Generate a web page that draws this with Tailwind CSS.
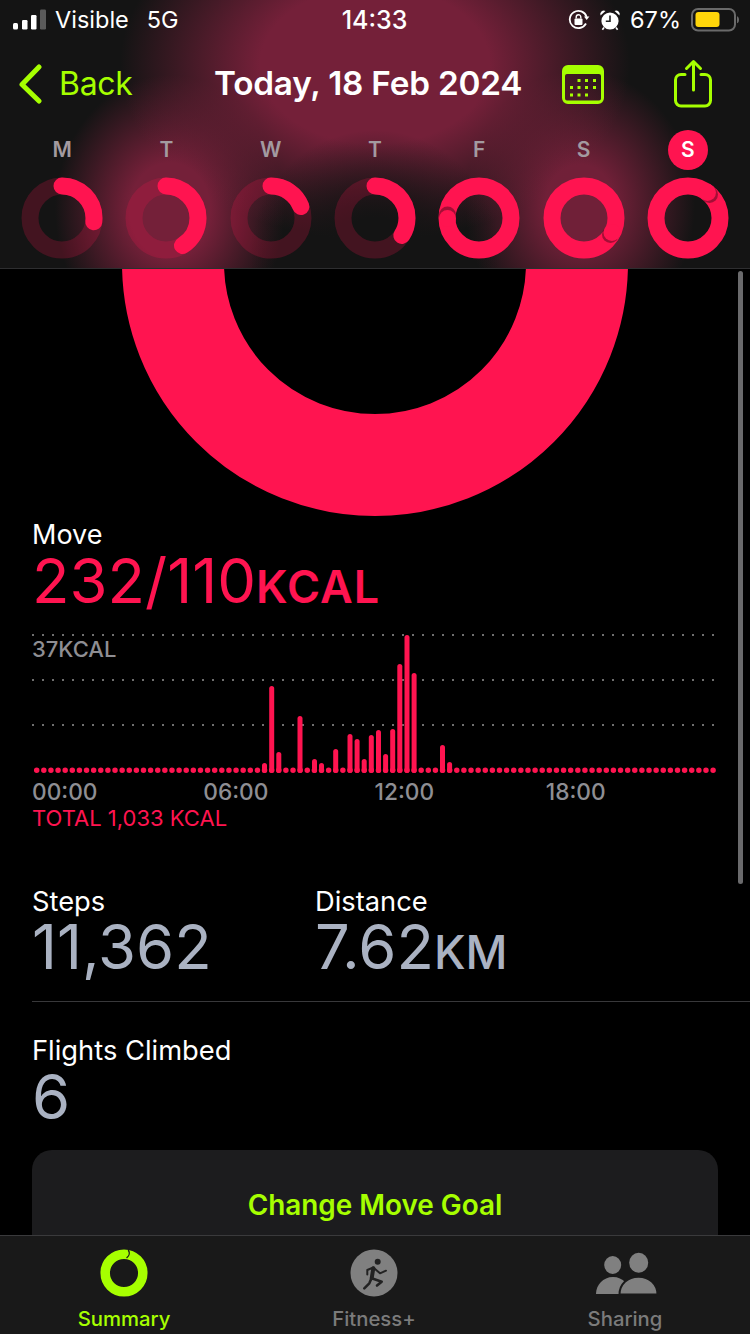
<!DOCTYPE html>
<html lang="en">
<head>
<meta charset="utf-8">
<title>Activity</title>
<script src="https://cdn.jsdelivr.net/npm/@tailwindcss/browser@4"></script>
</head>
<body class="bg-black">
<div class="w-[750px] h-[1334px] flex flex-col overflow-hidden bg-black text-white font-['Inter',sans-serif]">

  <!-- Header -->
  <header class="h-[269px] shrink-0 border-b border-[#2e2e30] bg-[#141414] bg-[radial-gradient(ellipse_125px_125px_at_375px_255px,#141414_30%,transparent_100%),radial-gradient(ellipse_255px_175px_at_375px_65px,#742039_45%,transparent_100%),radial-gradient(ellipse_115px_135px_at_170px_210px,#742039_35%,transparent_100%),radial-gradient(ellipse_115px_135px_at_580px_205px,#702038_30%,transparent_100%)]">
    <!-- Status bar -->
    <div class="h-[40px] flex items-center justify-between pl-[13px] pr-[11px] text-[23.5px] leading-none">
      <div class="flex items-center w-[260px]">
        <svg width="34" height="22" viewBox="0 0 34 22" class="shrink-0">
          <rect x="0" y="14" width="5" height="6.5" rx="1.5" fill="#fff"/>
          <rect x="9" y="11" width="5.5" height="9.5" rx="1.2" fill="#fff"/>
          <rect x="18" y="6" width="5.5" height="14.5" rx="1.2" fill="#fff"/>
          <rect x="27" y="0.5" width="6" height="20" rx="1.2" fill="#5a5a5a"/>
        </svg>
        <span class="ml-[8px]">Visible</span>
        <span class="ml-[18px]">5G</span>
      </div>
      <span class="font-medium text-[25px] -ml-[3px]">14:33</span>
      <div class="flex items-center justify-end w-[260px]">
        <svg width="22" height="22" viewBox="0 0 22 22" fill="none" class="mr-[9px]">
          <path d="M18 14.5A8.6 8.6 0 1 1 18.6 8" stroke="#fff" stroke-width="1.8"/>
          <path d="M16 7.5h5.4l-2.7 3.6z" fill="#fff"/>
          <rect x="6.5" y="9.5" width="8" height="6.5" rx="1" fill="#fff"/>
          <path d="M8.2 9.5V8a2.3 2.3 0 0 1 4.6 0v1.5" stroke="#fff" stroke-width="1.4"/>
        </svg>
        <svg width="22" height="22" viewBox="0 0 22 22" fill="none" class="mr-[9px]">
          <circle cx="11" cy="12" r="8.6" fill="#fff"/>
          <path d="M11 6.5V12.3H6.8" stroke="#222" stroke-width="1.6"/>
          <path d="M1.5 6.5A3.6 3.6 0 0 1 6.5 2ZM20.5 6.5A3.6 3.6 0 0 0 15.5 2Z" fill="#fff"/>
          <path d="M5 18.5 3.4 20.8M17 18.5l1.6 2.3" stroke="#fff" stroke-width="1.6"/>
        </svg>
        <span>67%</span>
        <svg width="48" height="24" viewBox="0 0 48 24" fill="none" class="ml-[10px]">
          <rect x="1" y="1" width="43" height="21.5" rx="6" stroke="#6a6a6a" stroke-width="2"/>
          <rect x="4.5" y="4" width="24" height="15" rx="3" fill="#ffd60a"/>
          <path d="M46 8.2c1.5.5 2 2 2 3.5s-.5 3-2 3.5z" fill="#6a6a6a"/>
        </svg>
      </div>
    </div>

    <!-- Nav -->
    <div class="h-[88px] relative flex items-center">
      <div class="flex items-center pl-[19px] w-[200px] text-[#a6ff00] text-[32px]">
        <svg width="24" height="40" viewBox="0 0 24 40" fill="none">
          <path d="M20 3 3 20.5 20 37" stroke="#a6ff00" stroke-width="5" stroke-linecap="round" stroke-linejoin="round"/>
        </svg>
        <span class="ml-[16px] tracking-[-0.3px]">Back</span>
      </div>
      <h1 class="absolute left-[214px] text-[33.3px] font-semibold whitespace-nowrap tracking-[-0.2px]">Today, 18 Feb 2024</h1>
      <svg width="42" height="39" viewBox="0 0 42 39" class="absolute left-[562px] top-[25px]">
        <path fill-rule="evenodd" fill="#a6ff00" d="M6 0H36a6 6 0 0 1 6 6V33a6 6 0 0 1-6 6H6a6 6 0 0 1-6-6V6a6 6 0 0 1 6-6ZM5 9a2 2 0 0 0-2 2V33.500a2 2 0 0 0 2 2H37a2 2 0 0 0 2-2V11a2 2 0 0 0-2-2Z"/>
        <g fill="#a6ff00">
          <rect x="15.500" y="14" width="3" height="3"/><rect x="23" y="14" width="3" height="3"/><rect x="31" y="14" width="3" height="3"/>
          <rect x="8" y="21" width="3" height="3"/><rect x="15.500" y="21" width="3" height="3"/><rect x="23" y="21" width="3" height="3"/><rect x="31" y="21" width="3" height="3"/>
          <rect x="8" y="28.500" width="3" height="3"/><rect x="15.500" y="28.500" width="3" height="3"/><rect x="23" y="28.500" width="3" height="3"/>
        </g>
      </svg>
      <svg width="42" height="50" viewBox="0 0 42 50" fill="none" class="absolute left-[673px] top-[19px]" stroke="#a6ff00" stroke-width="3" stroke-linecap="round" stroke-linejoin="round">
        <path d="M12 15.500H8a5.500 5.500 0 0 0-5.500 5.500V41.500a5.500 5.500 0 0 0 5.500 5.500H32a5.500 5.500 0 0 0 5.500-5.500V21a5.500 5.500 0 0 0-5.500-5.500H28"/>
        <path d="M20.500 31V2.500M13.500 9.500l7-7 7 7"/>
      </svg>
    </div>

    <!-- Week -->
    <div class="grid grid-cols-7 w-[730px] ml-[10px] h-[140px] text-[21px] font-semibold text-[#a39aa0]">
      <div class="flex flex-col items-center">
        <div class="h-[44px] mb-[4px] flex items-center justify-center">M</div>
        <svg width="84" height="84" viewBox="0 0 84 84" fill="none" stroke-width="17">
          <circle cx="42" cy="42" r="32" stroke="#ff1450" stroke-opacity=".2"/>
          <circle cx="42" cy="42" r="32" stroke="#ff1450" pathLength="360" stroke-dasharray="97 360" stroke-linecap="round" transform="rotate(-90 42 42)"/>
        </svg>
      </div>
      <div class="flex flex-col items-center">
        <div class="h-[44px] mb-[4px] flex items-center justify-center">T</div>
        <svg width="84" height="84" viewBox="0 0 84 84" fill="none" stroke-width="17">
          <circle cx="42" cy="42" r="32" stroke="#ff1450" stroke-opacity=".2"/>
          <circle cx="42" cy="42" r="32" stroke="#ff1450" pathLength="360" stroke-dasharray="149 360" stroke-linecap="round" transform="rotate(-90 42 42)"/>
        </svg>
      </div>
      <div class="flex flex-col items-center">
        <div class="h-[44px] mb-[4px] flex items-center justify-center">W</div>
        <svg width="84" height="84" viewBox="0 0 84 84" fill="none" stroke-width="17">
          <circle cx="42" cy="42" r="32" stroke="#ff1450" stroke-opacity=".2"/>
          <circle cx="42" cy="42" r="32" stroke="#ff1450" pathLength="360" stroke-dasharray="69 360" stroke-linecap="round" transform="rotate(-90 42 42)"/>
        </svg>
      </div>
      <div class="flex flex-col items-center">
        <div class="h-[44px] mb-[4px] flex items-center justify-center">T</div>
        <svg width="84" height="84" viewBox="0 0 84 84" fill="none" stroke-width="17">
          <circle cx="42" cy="42" r="32" stroke="#ff1450" stroke-opacity=".2"/>
          <circle cx="42" cy="42" r="32" stroke="#ff1450" pathLength="360" stroke-dasharray="123 360" stroke-linecap="round" transform="rotate(-90 42 42)"/>
        </svg>
      </div>
      <div class="flex flex-col items-center">
        <div class="h-[44px] mb-[4px] flex items-center justify-center">F</div>
        <svg width="84" height="84" viewBox="0 0 84 84" fill="none">
          <circle cx="42" cy="42" r="32" stroke="#ff1450" stroke-width="17"/>
          <circle cx="10.500" cy="39" r="8.500" fill="#5a0a20" fill-opacity=".55"/>
          <circle cx="10.500" cy="42.500" r="8.500" fill="#ff1450"/>
        </svg>
      </div>
      <div class="flex flex-col items-center">
        <div class="h-[44px] mb-[4px] flex items-center justify-center">S</div>
        <svg width="84" height="84" viewBox="0 0 84 84" fill="none">
          <circle cx="42" cy="42" r="32" stroke="#ff1450" stroke-width="17"/>
          <circle cx="68.500" cy="58.500" r="8.500" fill="#5a0a20" fill-opacity=".55"/>
          <circle cx="70" cy="56.500" r="8.500" fill="#ff1450"/>
        </svg>
      </div>
      <div class="flex flex-col items-center">
        <div class="h-[44px] mb-[4px] flex items-center justify-center">
          <span class="w-[40px] h-[40px] rounded-full bg-[#ff1450] text-white flex items-center justify-center">S</span>
        </div>
        <svg width="84" height="84" viewBox="0 0 84 84" fill="none">
          <circle cx="42" cy="42" r="32" stroke="#ff1450" stroke-width="17"/>
          <circle cx="63.500" cy="18.500" r="8.500" fill="#5a0a20" fill-opacity=".55"/>
          <circle cx="61.500" cy="16.500" r="8.500" fill="#ff1450"/>
        </svg>
      </div>
    </div>
  </header>

  <!-- Scrolling content -->
  <main class="relative flex-1 min-h-0 overflow-hidden">
    <svg width="750" height="248" viewBox="0 269 750 248" fill="none" class="block">
      <circle cx="375" cy="263" r="202" stroke="#ff1450" stroke-width="102"/>
    </svg>

    <section class="px-[32px]">
      <p class="text-[27px] leading-[32px] mt-[2px]">Move</p>
      <p class="text-[#ff1450] text-[61.500px] leading-[60px] whitespace-nowrap">232/110<span class="text-[45px] font-semibold tracking-[1px]">KCAL</span></p>

      <div class="relative mt-[16px] -mx-[2px]">
        <svg width="690" height="142" viewBox="30 632 690 142" fill="none" class="block">
          <g stroke="#6f6f6f" stroke-width="2" stroke-dasharray="2 8">
            <path d="M32 634H716"/><path d="M32 679H716"/><path d="M32 724H716"/>
          </g>
          <path d="M36.700 769.300H716" stroke="#ff1450" stroke-width="5.500" stroke-linecap="round" stroke-dasharray="0 7.120"/>
          <g fill="#ff1450">
            <rect x="262" y="762" width="5" height="10" rx="2.500"/>
            <rect x="269.200" y="685" width="5" height="87" rx="2.500"/>
            <rect x="276.300" y="751" width="5" height="21" rx="2.500"/>
            <rect x="297.500" y="715" width="5" height="57" rx="2.500"/>
            <rect x="312" y="758" width="5" height="14" rx="2.500"/>
            <rect x="319" y="762" width="5" height="10" rx="2.500"/>
            <rect x="333.200" y="748" width="5" height="24" rx="2.500"/>
            <rect x="347.500" y="733" width="5" height="39" rx="2.500"/>
            <rect x="354.600" y="738" width="5" height="34" rx="2.500"/>
            <rect x="361.700" y="758" width="5" height="14" rx="2.500"/>
            <rect x="368.800" y="734" width="5" height="38" rx="2.500"/>
            <rect x="376" y="729" width="5" height="43" rx="2.500"/>
            <rect x="383.100" y="753" width="5" height="19" rx="2.500"/>
            <rect x="390.200" y="728" width="5" height="44" rx="2.500"/>
            <rect x="397.300" y="663" width="5" height="109" rx="2.500"/>
            <rect x="404.500" y="634" width="5" height="138" rx="2.500"/>
            <rect x="411.600" y="672" width="5" height="100" rx="2.500"/>
            <rect x="440" y="744" width="5" height="28" rx="2.500"/>
            <rect x="447.100" y="761" width="5" height="11" rx="2.500"/>
          </g>
        </svg>
        <span class="absolute left-[2px] top-[4px] text-[22px] font-medium leading-[24px] text-[#8e8e93]">37KCAL</span>
      </div>
      <div class="grid grid-cols-4 w-[685px] text-[22.700px] leading-[27px] font-medium text-[#8e8e93] mt-[3px]">
        <span>00:00</span><span>06:00</span><span>12:00</span><span>18:00</span>
      </div>
      <p class="text-[#ff1450] text-[22px] leading-[26px]">TOTAL 1,033 KCAL</p>
    </section>

    <section class="mt-[55px]">
      <div class="flex px-[32px] pb-[19px]">
        <div class="w-[283px]">
          <p class="text-[27.300px] leading-[31px]">Steps</p>
          <p class="text-[#aab2c2] text-[61.500px] leading-[60px]">11,362</p>
        </div>
        <div>
          <p class="text-[27.300px] leading-[31px]">Distance</p>
          <p class="text-[#aab2c2] text-[61.500px] leading-[60px]">7.62<span class="text-[46px] font-medium">KM</span></p>
        </div>
      </div>
      <div class="ml-[32px] h-px bg-[#38383a]"></div>
      <div class="px-[32px] pt-[33px]">
        <p class="text-[27.300px] leading-[32px]">Flights Climbed</p>
        <p class="text-[#aab2c2] text-[61.500px] leading-[60px]">6</p>
      </div>
    </section>

    <div class="mx-[32px] mt-[23px] h-[140px] rounded-t-[20px] bg-[#1c1c1e] pt-[37px] text-center text-[#a6ff00] text-[27.900px] leading-[36px] font-semibold">Change Move Goal</div>

    <div class="absolute left-[738px] top-[2px] w-[5px] h-[613px] rounded-full bg-[#6a6a6c]"></div>
  </main>

  <!-- Tab bar -->
  <nav class="relative h-[99px] shrink-0 bg-[#191919] border-t border-[#3a3a3c] grid grid-cols-[248px_252px_250px] text-[20.300px] leading-[26px] font-medium text-[#7b7b7b]">
    <div class="flex flex-col items-center pt-[13px] text-[#a6ff00]">
      <svg width="48" height="48" viewBox="0 0 48 48" fill="none">
        <circle cx="24" cy="24" r="18.800" stroke="#a6ff00" stroke-width="9.500"/>
        <path d="M28.500 1.500c1.300 2 1 5-1.500 7" stroke="#191919" stroke-width="1.400" stroke-linecap="round"/>
      </svg>
      <span class="mt-[9px]">Summary</span>
    </div>
    <div class="flex flex-col items-center pt-[13px]">
      <svg width="48" height="48" viewBox="0 0 48 48" fill="none">
        <circle cx="24" cy="24" r="23.500" fill="#808080"/>
        <circle cx="27.700" cy="12.700" r="3" fill="#222"/>
        <g stroke="#222" stroke-linecap="round" stroke-linejoin="round">
          <path d="M23.300 19.300 21.700 29.300" stroke-width="4"/>
          <path d="M23.300 18.500 30 24.300 36 21.700M23.300 18.500 17.300 21 17.300 25.500" stroke-width="2"/>
          <path d="M21.700 29.300 31.700 32.700 27 36.500M21.500 29.300 19.300 34.300 14.300 39.300" stroke-width="2.600"/>
        </g>
      </svg>
      <span class="mt-[9px]">Fitness+</span>
    </div>
    <div class="flex flex-col items-center pt-[13px]">
      <svg width="66" height="48" viewBox="0 0 66 48">
        <ellipse cx="20.700" cy="16" rx="8.500" ry="9" fill="#808080"/>
        <ellipse cx="46.700" cy="13.700" rx="9.500" ry="10" fill="#808080"/>
        <path d="M4 45c0-9 7-17 17-17s17 8 17 17z" fill="#808080"/>
        <path d="M27.500 45.500c0-10 8-17.800 19-17.800s19 7.800 19 17.800z" fill="#808080" stroke="#191919" stroke-width="2"/>
      </svg>
      <span class="mt-[9px]">Sharing</span>
    </div>
  </nav>
</div>
</body>
</html>
